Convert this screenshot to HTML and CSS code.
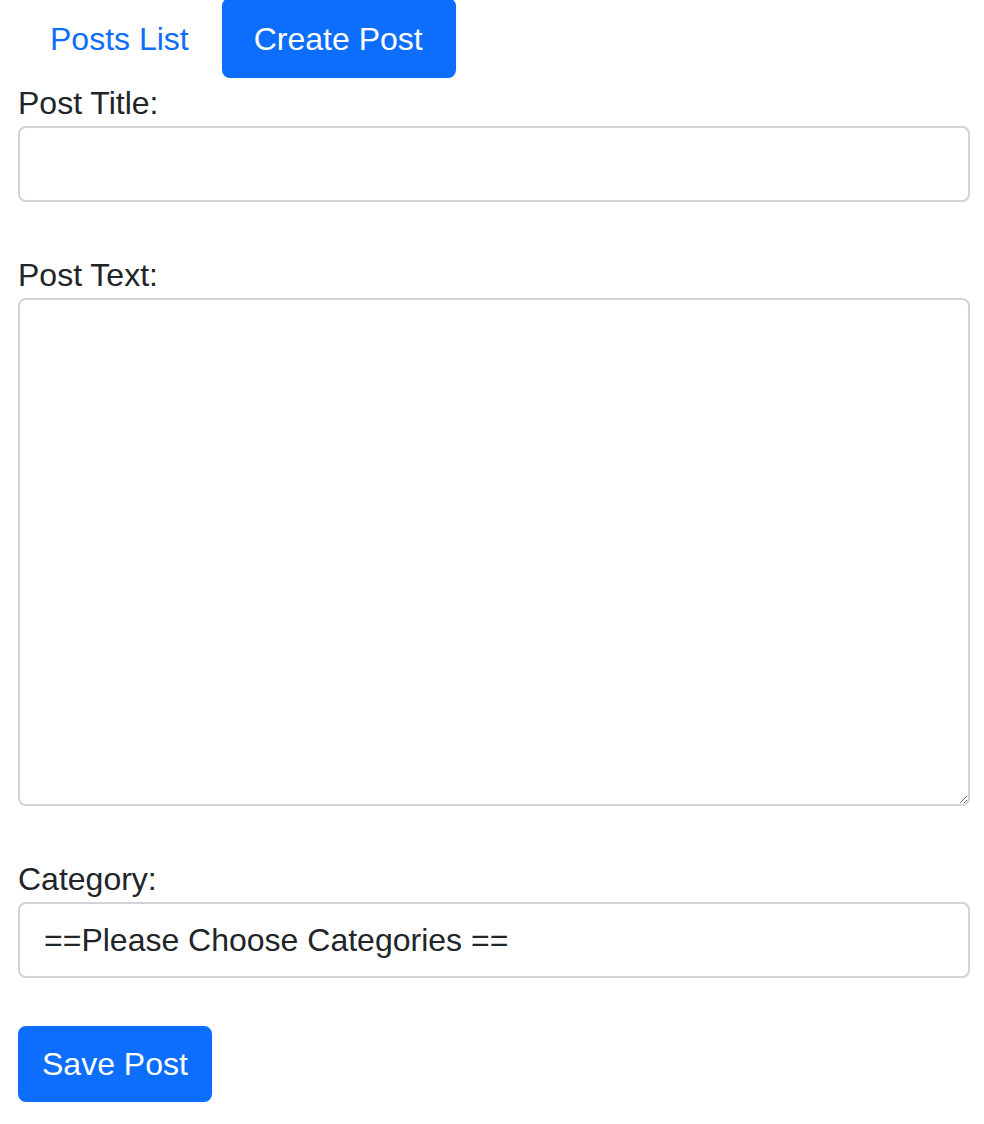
FILE: index.html
```html
<!doctype html>
<html>

<head>
    <meta charset="utf-8">
    <title>Create Post</title>
    <link rel="stylesheet" href="styles.css">
</head>

<body>
<!--Top tabs-->
<ul class="nav">
    <li><a href="#" class="navLink">Posts List</a></li>
    <li><a href="#" class="navLink active">Create Post</a></li>
</ul>

<!--Post form-->
<form class="postForm" onsubmit="return false">
    <label for="title" class="formLabel">Post Title:</label>
    <input type="text" id="title" class="formControl">
    <br>
    <label for="body" class="formLabel">Post Text:</label>
    <textarea id="body" class="formControl textArea" rows="10"></textarea>
    <br>
    <label for="category" class="formLabel">Category:</label>
    <select id="category" class="formControl">
        <option>==Please Choose Categories ==</option>
    </select>
    <br>
    <button type="submit" class="btnPrimary">Save Post</button>
</form>
</body>

</html>
```

FILE: styles.css
```css
body{margin:0 14px 0 18px; font-family:"Liberation Sans", Arial, sans-serif; font-size:32px; line-height:48px; color:#212529; background:#fff;}
/*Tabs at the top*/
.nav{display:flex; list-style:none; margin:-2px 0 0 0; padding:0;}
.navLink{display:block; padding:17px 32px 15px 32px; color:#0d6efd; text-decoration:none; border-radius:8px;}
.navLink.active{background-color:#0d6efd; color:#fff; margin-left:1px; padding-right:33px;}
/*Form fields*/
.postForm{display:flex; flex-direction:column; align-items:flex-start;}
.postForm br{display:block; content:""; height:48px;}
.formLabel{display:block; padding-top:1px; margin-bottom:-1px;}
.formControl{display:block; box-sizing:border-box; width:100%; margin:0; padding:12px 24px; font:inherit; line-height:48px; color:#212529; background:#fff; border:2px solid #ced4da; border-radius:8px; appearance:none; -webkit-appearance:none; outline:none;}
.textArea{height:508px; resize:vertical;}
/*Save button*/
.btnPrimary{padding:12px 22px; font:inherit; line-height:48px; color:#fff; background-color:#0d6efd; border:2px solid #0d6efd; border-radius:8px; cursor:pointer;}
```
